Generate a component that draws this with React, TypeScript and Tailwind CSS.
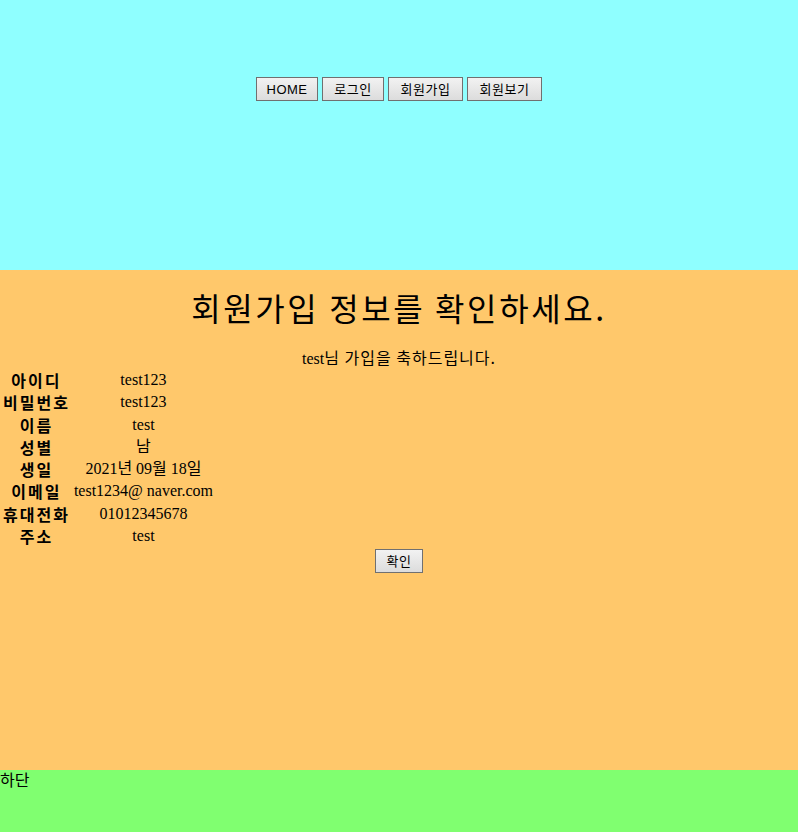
const menus = [
  { label: 'HOME', width: 'w-[62px]' },
  { label: '로그인', width: 'w-[62px]' },
  { label: '회원가입', width: 'w-[75px]' },
  { label: '회원보기', width: 'w-[75px]' },
];

const rows: [string, string][] = [
  ['아이디', 'test123'],
  ['비밀번호', 'test123'],
  ['이름', 'test'],
  ['성별', '남'],
  ['생일', '2021년 09월 18일'],
  ['이메일', 'test1234@ naver.com'],
  ['휴대전화', '01012345678'],
  ['주소', 'test'],
];

const btn =
  "h-6 border border-[#707070] bg-gradient-to-b from-[#f2f2f2] to-[#dcdcdc] text-[13px] text-black leading-none tracking-[0.5px] font-['Liberation_Sans','Noto_Sans_CJK_KR',sans-serif]";

const App = () => {
  return (
    <div className="w-[798px] min-h-[832px] flex flex-col font-['Noto_Sans_CJK_KR',sans-serif] text-black">
      <header className="h-[270px] bg-[#8fffff] pt-[77px] flex justify-center gap-1">
        {menus.map(menu => (
          <button key={menu.label} className={`${btn} ${menu.width}`}>
            {menu.label}
          </button>
        ))}
      </header>

      <main className="h-[500px] bg-[#ffc86b] flex flex-col">
        <h1 className="mt-[17px] text-center text-[32px] leading-[40px] font-normal tracking-[2.6px]">
          회원가입 정보를 확인하세요.
        </h1>
        <p className="mt-[21px] text-center text-[16px] leading-[18px]">
          <span className="font-['Liberation_Serif',serif]">test</span>
          <span className="tracking-[1px]">님 가입을 축하드립니다.</span>
        </p>
        <table className="border-separate border-spacing-[2px] self-start">
          <tbody>
            {rows.map(([label, value]) => (
              <tr key={label}>
                <td className="px-px py-px text-center font-semibold text-[16px] leading-[18.3px] tracking-[2px] whitespace-nowrap">
                  {label}
                </td>
                <td className="px-px py-px text-center text-[16px] leading-[18.3px] whitespace-nowrap font-['Liberation_Serif','Noto_Sans_CJK_KR',serif]">
                  {value}
                </td>
              </tr>
            ))}
          </tbody>
        </table>
        <div className="mt-px flex justify-center">
          <button className={`${btn} w-12`}>확인</button>
        </div>
      </main>

      <footer className="flex-1 bg-[#80ff70] text-[16px] leading-[18px]">하단</footer>
    </div>
  );
};

export default App;
